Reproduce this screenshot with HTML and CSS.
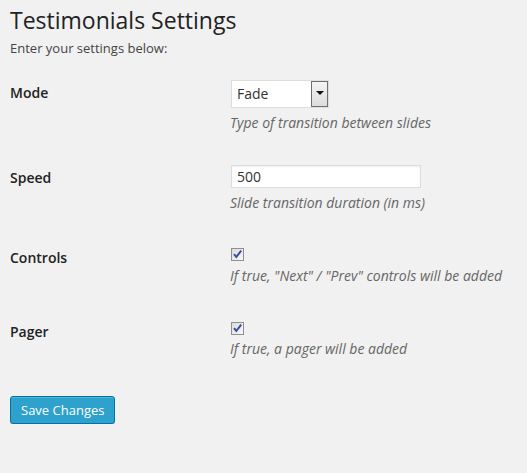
FILE: index.html
```html
<!DOCTYPE html>
<html lang="en">
<head>
<meta charset="utf-8">
<title>Testimonials Settings</title>
<link rel="stylesheet" href="styles.css">
</head>
<body>
<div class="wrap">
  <h2 class="title">Testimonials Settings</h2>
  <p class="intro">Enter your settings below:</p>

  <form class="settings">
    <div class="row row-select">
      <div class="label">Mode</div>
      <div class="field">
        <div class="select-box">
          <span class="select-value">Fade</span>
          <span class="select-arrow"><span class="tri"></span></span>
        </div>
        <p class="desc">Type of transition between slides</p>
      </div>
    </div>

    <div class="row row-input">
      <div class="label">Speed</div>
      <div class="field">
        <div class="text-input">500</div>
        <p class="desc">Slide transition duration (in ms)</p>
      </div>
    </div>

    <div class="row row-check">
      <div class="label">Controls</div>
      <div class="field">
        <span class="checkbox">
          <svg width="11" height="11" viewBox="0 0 11 11"><path d="M2 5.2 L4.3 8 L9.2 1.6" fill="none" stroke="#34509e" stroke-width="2"/></svg>
        </span>
        <p class="desc">If true, "Next" / "Prev" controls will be added</p>
      </div>
    </div>

    <div class="row row-check row-last">
      <div class="label">Pager</div>
      <div class="field">
        <span class="checkbox">
          <svg width="11" height="11" viewBox="0 0 11 11"><path d="M2 5.2 L4.3 8 L9.2 1.6" fill="none" stroke="#34509e" stroke-width="2"/></svg>
        </span>
        <p class="desc">If true, a pager will be added</p>
      </div>
    </div>

    <div class="actions">
      <button type="button" class="button-primary">Save Changes</button>
    </div>
  </form>
</div>
</body>
</html>
```

FILE: styles.css
```css
html, body {
  margin: 0;
  padding: 0;
  background: #f1f1f1;
}

body {
  font-family: "Open Sans", "Liberation Sans", sans-serif;
  color: #444;
  font-size: 13px;
  line-height: 18px;
}

.wrap {
  padding: 0 10px;
}

.title {
  margin: 6px 0 0;
  font-size: 23px;
  line-height: 29px;
  font-weight: 400;
  color: #222;
}

.intro {
  margin: 4px 0 0;
  font-size: 13px;
  line-height: 18px;
  color: #444;
}

.settings {
  margin: 0;
}

.row {
  display: grid;
  grid-template-columns: 220px 1fr;
  padding-bottom: 13px;
}

.label {
  margin-top: 1px;
  font-size: 14px;
  line-height: 18px;
  font-weight: 600;
  color: #222;
}

.row-select {
  padding-top: 23px;
}
.row-select .label {
  margin-top: 4px;
}

.row-input {
  padding-top: 20px;
}
.row-input .label {
  margin-top: 4px;
}

.row-check {
  padding-top: 23px;
}

.row-last {
  padding-top: 24px;
}
.row-last .label {
  margin-top: 1px;
}
.row-last .desc {
  margin-top: 5px;
}

.field {
  display: flex;
  flex-direction: column;
  align-items: flex-start;
}

.select-box {
  box-sizing: border-box;
  display: flex;
  align-items: center;
  width: 98px;
  height: 28px;
  margin-left: 1px;
  background: #fff;
  border: 1px solid #ddd;
}

.select-value {
  flex: 1;
  padding-left: 5px;
  font-size: 14px;
  line-height: 18px;
  color: #333;
}

.select-arrow {
  box-sizing: border-box;
  display: flex;
  align-items: center;
  justify-content: center;
  width: 17px;
  height: 26px;
  border: 1px solid #707070;
  background: linear-gradient(#f4f4f4, #dcdcdc);
}

.tri {
  width: 0;
  height: 0;
  border-left: 4px solid transparent;
  border-right: 4px solid transparent;
  border-top: 4px solid #111;
  margin-top: -2px;
}

.text-input {
  box-sizing: border-box;
  width: 190px;
  height: 23px;
  margin-left: 1px;
  padding: 2px 5px 0;
  background: #fff;
  border: 1px solid #ddd;
  box-shadow: inset 0 1px 2px rgba(0, 0, 0, 0.07);
  font-size: 14px;
  line-height: 18px;
  color: #333;
}

.checkbox {
  box-sizing: border-box;
  display: flex;
  align-items: center;
  justify-content: center;
  width: 13px;
  height: 13px;
  margin-left: 1px;
  border: 1px solid #8f8f8f;
  background: linear-gradient(135deg, #dcdcdc, #f8f8f8);
}

.checkbox svg {
  display: block;
}

.desc {
  margin: 6px 0 0;
  font-size: 14px;
  line-height: 18px;
  font-style: italic;
  color: #666;
}

.actions {
  padding-top: 25px;
}

.button-primary {
  box-sizing: border-box;
  height: 28px;
  margin: 0;
  padding: 0 10px 1px;
  font-family: "Open Sans", "Liberation Sans", sans-serif;
  font-size: 13px;
  line-height: 26px;
  color: #fff;
  background: #2ea2cc;
  border: 1px solid #0074a2;
  border-radius: 3px;
  box-shadow: inset 0 1px 0 rgba(120, 200, 230, 0.5), 0 1px 0 rgba(0, 0, 0, 0.15);
  cursor: pointer;
}
```
